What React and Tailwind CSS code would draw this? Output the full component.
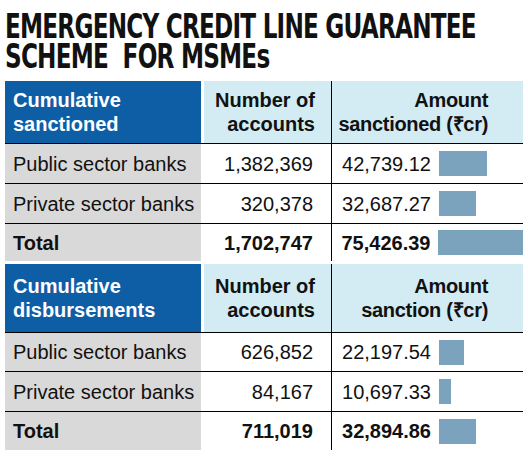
import React from 'react';

const sections = [
  {
    title: ['Cumulative', 'sanctioned'],
    amountLabel: 'sanctioned (₹cr)',
    headerH: 'h-[62px]',
    headerPt: 'pt-[7px]',
    rows: [
      { name: 'Public sector banks', accounts: '1,382,369', amount: '42,739.12', bar: 48, h: 'h-[40px]' },
      { name: 'Private sector banks', accounts: '320,378', amount: '32,687.27', bar: 37, h: 'h-[40px]' },
      { name: 'Total', accounts: '1,702,747', amount: '75,426.39', bar: 85, h: 'h-[38px]', total: true },
    ],
  },
  {
    title: ['Cumulative', 'disbursements'],
    amountLabel: 'sanction (₹cr)',
    headerH: 'h-[68px]',
    headerPt: 'pt-[10px]',
    rows: [
      { name: 'Public sector banks', accounts: '626,852', amount: '22,197.54', bar: 25, h: 'h-[39px]' },
      { name: 'Private sector banks', accounts: '84,167', amount: '10,697.33', bar: 12, h: 'h-[40px]' },
      { name: 'Total', accounts: '711,019', amount: '32,894.86', bar: 37, h: 'h-[39px]', total: true },
    ],
  },
];

const Section = ({ data }) => (
  <div>
    {/* header */}
    <div className={`grid grid-cols-[196px_3px_127px_192px] ${data.headerH} text-[20px] leading-[24px] font-bold`}>
      <div className={`bg-[#0e5ea6] text-white pl-[8px] ${data.headerPt}`}>
        <div>{data.title[0]}</div>
        <div>{data.title[1]}</div>
      </div>
      <div className="bg-white" />
      <div className={`bg-[#d3ebf3] text-right pr-[16px] ${data.headerPt}`}>
        <div>Number of</div>
        <div>accounts</div>
      </div>
      <div className={`bg-[#d3ebf3] border-l border-black text-right pr-[35px] tracking-[-0.3px] ${data.headerPt}`}>
        <div>Amount</div>
        <div>{data.amountLabel}</div>
      </div>
    </div>

    {data.rows.map((r) => (
      <div
        key={r.name}
        className={`grid grid-cols-[196px_3px_127px_192px] ${r.h} border-t border-black text-[20px] leading-[24px] ${
          r.total ? 'font-bold' : 'font-normal'
        }`}
      >
        <div className="bg-[#d9d9d9] pl-[8px] flex items-center">{r.name}</div>
        <div />
        <div className="flex items-center justify-end pr-[18px]">{r.accounts}</div>
        <div className="border-l border-black flex items-center">
          <span className="w-[99px] text-right">{r.amount}</span>
          <span className="ml-[8px] h-[25px] bg-[#7ba3bd]" style={{ width: r.bar }} />
        </div>
      </div>
    ))}
  </div>
);

export default function App() {
  return (
    <div className="w-[528px] h-[463px] bg-white text-[#111] font-['Liberation_Sans',Arial,sans-serif] pl-[5px] overflow-hidden">
      <h1 className="pt-[12px] mb-[9px] w-max origin-left scale-x-[0.78] whitespace-nowrap text-[33px] leading-[30px] font-bold text-[#111] font-['DejaVu_Sans_Condensed','DejaVu_Sans',sans-serif] tracking-[-1px]">
        <div>EMERGENCY CREDIT LINE GUARANTEE</div>
        <div>SCHEME&nbsp; FOR MSMEs</div>
      </h1>
      <div className="w-[518px] flex flex-col gap-[3px]">
        {sections.map((s, i) => (
          <Section key={i} data={s} />
        ))}
      </div>
    </div>
  );
}
